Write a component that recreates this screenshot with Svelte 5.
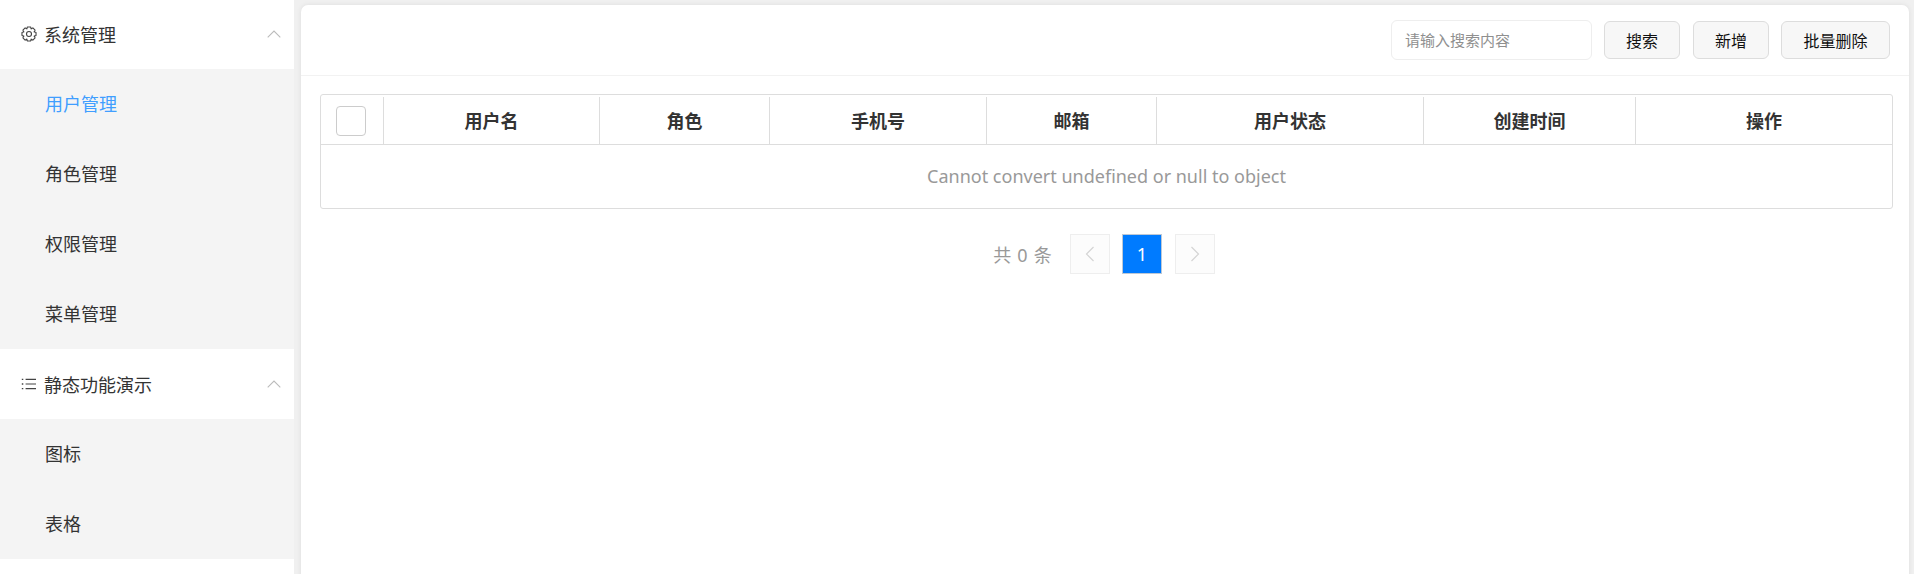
<script>
	const groups = [
		{ title: '系统管理', icon: 'gear', items: ['用户管理', '角色管理', '权限管理', '菜单管理'] },
		{ title: '静态功能演示', icon: 'list', items: ['图标', '表格'] }
	];
	const columns = ['用户名', '角色', '手机号', '邮箱', '用户状态', '创建时间', '操作'];
	let keyword = '';

	// outline of an 8 tooth cog, centred on 8,8
	function cogPath() {
		let d = '';
		for (let i = 0; i < 8; i++) {
			const a = (i * Math.PI) / 4;
			const pts = [
				[5.6, a - 0.42],
				[7.2, a - 0.22],
				[7.2, a + 0.22],
				[5.6, a + 0.42]
			];
			for (const [r, t] of pts) {
				const x = (8 + r * Math.cos(t)).toFixed(2);
				const y = (8 + r * Math.sin(t)).toFixed(2);
				d += (d ? 'L' : 'M') + x + ' ' + y;
			}
		}
		return d + 'Z';
	}
	const cog = cogPath();
</script>

<div class="layout">
	<aside class="sidebar">
		{#each groups as group}
			<div class="group-title">
				{#if group.icon === 'gear'}
					<svg class="icon" viewBox="0 0 16 16" fill="none" stroke="#444" stroke-width="1.1" stroke-linejoin="round">
						<path d={cog} />
						<circle cx="8" cy="8" r="2.5" />
					</svg>
				{:else}
					<svg class="icon" viewBox="0 0 16 16" fill="none" stroke="#444" stroke-width="1.1">
						<path d="M4.6 3.4H15M4.6 8H15M4.6 12.6H15" />
						<path d="M.8 3.4h1.5M.8 8h1.5M.8 12.6h1.5" stroke-width="1.4" />
					</svg>
				{/if}
				<span>{group.title}</span>
				<svg class="arrow" viewBox="0 0 14 8" fill="none" stroke="#bbb" stroke-width="1.1">
					<path d="M.7 7.3 7 1l6.3 6.3" />
				</svg>
			</div>
			<ul class="submenu">
				{#each group.items as item}
					<li class:active={item === '用户管理'}>{item}</li>
				{/each}
			</ul>
		{/each}
	</aside>

	<main class="card">
		<div class="toolbar">
			<input type="text" placeholder="请输入搜索内容" bind:value={keyword} />
			<button>搜索</button>
			<button>新增</button>
			<button class="wide">批量删除</button>
		</div>

		<div class="content">
			<div class="table">
				<div class="head">
					<div class="cell"><span class="checkbox"></span></div>
					{#each columns as col}
						<div class="cell">{col}</div>
					{/each}
				</div>
				<div class="empty">Cannot convert undefined or null to object</div>
			</div>

			<div class="pager">
				<span class="total">共 0 条</span>
				<span class="page">
					<svg viewBox="0 0 10 16" fill="none" stroke="#d4d4d4" stroke-width="1.2"><path d="M8.5 1 1.5 8l7 7" /></svg>
				</span>
				<span class="page current">1</span>
				<span class="page">
					<svg viewBox="0 0 10 16" fill="none" stroke="#d4d4d4" stroke-width="1.2"><path d="M1.5 1l7 7-7 7" /></svg>
				</span>
			</div>
		</div>
	</main>
</div>

<style>
	:global(body) {
		background: #f0f0f0;
		overflow: hidden;
	}

	.layout {
		display: flex;
		height: 574px;
		overflow: hidden;
		font-family: "Noto Sans", "Noto Sans CJK SC", sans-serif;
		color: #333;
	}

	.sidebar {
		width: 294px;
		flex-shrink: 0;
		margin-top: -1px;
		background: #fff;
	}

	.group-title {
		display: flex;
		align-items: center;
		height: 70px;
		padding: 0 13px 0 21px;
		font-size: 18px;
	}

	.group-title span {
		flex: 1;
		margin-left: 7px;
	}

	.icon {
		width: 16px;
		height: 16px;
	}

	.arrow {
		width: 14px;
		height: 8px;
	}

	.submenu {
		list-style: none;
		margin: 0;
		padding: 0;
		background: #f4f4f4;
	}

	.submenu li {
		height: 70px;
		line-height: 71px;
		padding-left: 45px;
		font-size: 18px;
	}

	.submenu li.active {
		color: #409eff;
	}

	.card {
		flex: 1;
		margin: 5px 5px 0 7px;
		height: 640px;
		background: #fff;
		border-radius: 7px;
		box-shadow: 0 0 5px rgba(0, 0, 0, 0.08);
	}

	.toolbar {
		display: flex;
		align-items: center;
		justify-content: flex-end;
		height: 70px;
		padding-right: 19px;
		border-bottom: 1px solid #f2f2f2;
	}

	input {
		width: 201px;
		height: 40px;
		box-sizing: border-box;
		margin-right: 12px;
		padding: 0 13px;
		border: 1px solid #eee;
		border-radius: 6px;
		outline: none;
		font: inherit;
		font-size: 15px;
	}

	input::placeholder {
		color: #8f8f8f;
	}

	button {
		width: 76px;
		height: 38px;
		margin-left: 13px;
		padding: 0;
		background: #f7f7f7;
		border: 1px solid #ddd;
		border-radius: 6px;
		font: inherit;
		font-size: 16px;
		color: #111;
	}

	button:first-of-type {
		margin-left: 0;
	}

	button.wide {
		width: 109px;
		margin-left: 12px;
	}

	.content {
		padding: 18px 16px 0 19px;
	}

	.table {
		border: 1px solid #ddd;
		border-radius: 3px;
	}

	.head {
		display: grid;
		grid-template-columns: 63px 216px 170px 217px 170px 267px 212px 1fr;
		height: 50px;
		padding-top: 2px;
		box-sizing: border-box;
		border-bottom: 1px solid #ddd;
	}

	.cell {
		display: flex;
		align-items: center;
		justify-content: center;
		padding-bottom: 2px;
		border-right: 1px solid #ddd;
		font-size: 18px;
		font-weight: 700;
		color: #333;
	}

	.cell:first-child {
		justify-content: flex-start;
		padding-bottom: 0;
		padding-left: 15px;
	}

	.cell:last-child {
		border-right: 0;
	}

	.checkbox {
		width: 30px;
		height: 30px;
		box-sizing: border-box;
		border: 1px solid #ccc;
		border-radius: 4px;
		background: #fff;
	}

	.empty {
		height: 63px;
		line-height: 62px;
		text-align: center;
		font-size: 18px;
		color: #999;
	}

	.pager {
		display: flex;
		align-items: center;
		justify-content: center;
		gap: 12px;
		margin-top: 25px;
		padding-right: 5px;
	}

	.total {
		margin-right: 6px;
		font-size: 18px;
		word-spacing: 1.5px;
		color: #999;
	}

	.page {
		display: flex;
		align-items: center;
		justify-content: center;
		width: 40px;
		height: 40px;
		box-sizing: border-box;
		background: #fcfcfc;
		border: 1px solid #eee;
		font-size: 18px;
	}

	.page svg {
		width: 10px;
		height: 16px;
	}

	.page.current {
		margin-right: 1px;
		background: #007bff;
		border-color: #bcc8d6;
		color: #fff;
	}
</style>
